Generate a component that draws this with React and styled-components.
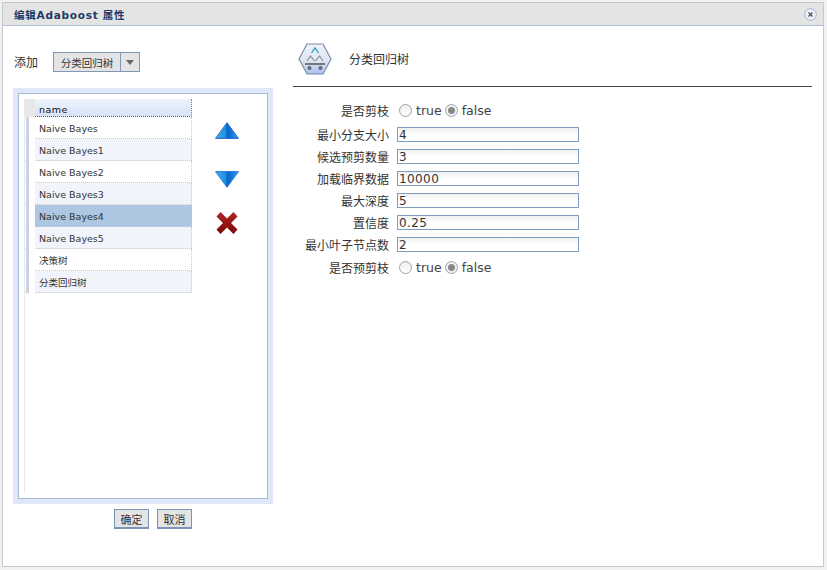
import React from "react";
import styled, { createGlobalStyle } from "styled-components";

const Global = createGlobalStyle`
  html, body { margin: 0; padding: 0; background: #f1f1f1; }
  * { box-sizing: border-box; }
`;
const latin = `"DejaVu Sans", "Noto Sans CJK SC", sans-serif`;
const Dialog = styled.main`
  width: 822px; height: 565px; margin: 2px 0 0 2px;
  border: 1px solid #c8c8c8; background: #fff; display: flex; flex-direction: column;
  font-family: ${latin}; color: #333;
`;
const TitleBar = styled.header`
  height: 23px; flex: none; background: #e4e4e4; border-bottom: 1px solid #aebcd9;
  display: flex; align-items: center; justify-content: space-between; padding: 0 6px 0 11px;
`;
const Title = styled.h1`
  margin: 0; font-size: 10.5px; font-weight: 700; color: #1d3a68; letter-spacing: 0.75px;
`;
const Body = styled.div`display: flex; flex: 1; min-height: 0;`;
const LeftCol = styled.section`
  width: 290px; flex: none; padding: 26px 0 0 10px; display: flex; flex-direction: column;
`;
const AddRow = styled.div`display: flex; align-items: center; height: 20px; gap: 14px; padding-left: 1px;`;
const AddLabel = styled.span`font-size: 12px; color: #333; width: 25px; padding-bottom: 1px;`;
const Combo = styled.div`display: flex; height: 20px;`;
const ComboText = styled.div`
  width: 68px; background: #e4e4e4; border: 1px solid #8097b5; font-size: 10.5px; color: #333;
  display: flex; align-items: center; justify-content: center;
`;
const ComboArrow = styled.div`
  width: 19px; background: #e4e4e4; border: 1px solid #8097b5; border-left-width: 0;
  display: flex; align-items: center; justify-content: center;
  &::after { content: ""; border: 4px solid transparent; border-top: 5px solid #666; border-bottom: 0; }
`;
const ListFrame = styled.div`
  width: 260px; height: 416px; margin-top: 16px; padding: 5px; background: #dfe8f8;
`;
const ListInner = styled.div`
  height: 100%; border: 1px solid #a9b9da; background: #fff; padding: 5px 0 0 5px; display: flex;
`;
const Grid = styled.div`
  width: 168px; height: 394px; border-left: 1px solid #e8e8e8; display: flex; flex-direction: column;
`;
const HeadRow = styled.div`display: flex; height: 18px;`;
const Corner = styled.div`width: 10px; background: #e8e8e8;`;
const HeadCell = styled.div`
  flex: 1; background: linear-gradient(#eef3fc, #d6e2f6); border-bottom: 1px dotted #555;
  border-right: 1px dotted #888; font-size: 9.5px; color: #111; letter-spacing: 0.5px;
  padding: 5px 0 0 4px;
`;
const Row = styled.div`display: flex; height: 22px;`;
const Stub = styled.div`
  width: 10px; padding-left: 1px; display: flex;
  background: linear-gradient(#ddd, #ddd) left bottom / 1px 1px no-repeat;
  &::before { content: ""; width: 2px; background: #c3d6f0; }
  &::after { content: ""; width: 1px; background: #cfcfcf; }
`;
const Cell = styled.div`
  flex: 1; display: flex; align-items: center; padding: 1px 0 0 4px; font-size: 9.5px; color: #333;
  background: ${p => (p.$selected ? "#adc6e2" : p.$alt ? "#f1f4fa" : "#fff")};
  border-bottom: 1px dotted #d8c8a0; border-right: 1px dotted #d8c8a0;
`;
const Tools = styled.div`width: 70px; display: flex; flex-direction: column; align-items: center;`;
const ToolSlot = styled.div`display: flex; margin-top: ${p => p.$top}px;`;
const Actions = styled.div`display: flex; gap: 8px; margin: 5px 0 0 101px;`;
const Btn = styled.button`
  width: 35px; height: 20px; padding: 0; background: #e4e4e4; border: 1px solid #7b93b5; border-bottom-width: 2px;
  font: 11px "Noto Sans CJK SC", sans-serif; color: #333;
`;
const RightCol = styled.section`width: 519px; flex: none; display: flex; flex-direction: column; padding-top: 17px;`;
const Head = styled.div`
  height: 44px; display: flex; align-items: flex-start; padding-left: 5px; gap: 17px; border-bottom: 1px solid #444; 
`;
const HeadText = styled.span`font: 12px "Noto Sans CJK SC", sans-serif; color: #333; margin-top: 7px;`;
const Form = styled.div`display: flex; flex-direction: column; padding-top: 11px;`;
const FormRow = styled.div`display: flex; align-items: center; height: ${p => (p.$radio ? 25 : 22)}px; gap: 8px;`;
const Label = styled.label`width: 96px; text-align: right; font: 12px "Noto Sans CJK SC", sans-serif; color: #333;`;
const Input = styled.input`
  width: 182px; height: 15px; border: 1px solid #7f9dc0; padding: 1px 1px 0; font: 12px ${latin}; color: #333;
  background: linear-gradient(#f0f0f0, #fff 50%); outline: none; letter-spacing: 0.4px;
`;
const Radios = styled.div`display: flex; align-items: center; font-size: 12.5px; color: #444; margin-left: 2px;`;
const RadioDot = styled.span`
  width: 13px; height: 13px; border-radius: 50%; border: 1px solid #9aa3ad; margin-right: 4px;
  background: ${p => (p.$on ? "radial-gradient(circle, #888 0 3px, #f2f2f2 4px)" : "linear-gradient(#eee, #fff)")};
`;
const RadioText = styled.span`margin-right: 3px;`;

const blue = (id) => (
  <defs><linearGradient id={id} x1="0" x2="1" y1="0" y2="0"><stop offset="0" stopColor="#4ab2f2"/><stop offset=".45" stopColor="#1c8ee0"/><stop offset=".5" stopColor="#0b62c6"/><stop offset=".7" stopColor="#1478d8"/><stop offset="1" stopColor="#3aa6ee"/></linearGradient></defs>
);
const Up = () => (
  <svg width="24" height="17" viewBox="0 0 24 17">
    {blue("u")}
    <path d="M12 .7 L23.5 16.4 H.5 Z" fill="url(#u)" stroke="#0a50c8" strokeWidth=".8" />
  </svg>
);
const Down = () => (
  <svg width="24" height="17" viewBox="0 0 24 17">
    {blue("d")}
    <path d="M.5 .6 H23.5 L12 16.3 Z" fill="url(#d)" stroke="#0a6ad8" strokeWidth=".8" />
  </svg>
);
const Del = () => (
  <svg width="24" height="24" viewBox="0 0 24 24">
    <defs><linearGradient id="x" x1="0" x2="0" y1="0" y2="1"><stop offset="0" stopColor="#b42222"/><stop offset="1" stopColor="#7a0808"/></linearGradient></defs>
    <path d="M1.5 5.5 L5.5 1 L12 7.5 L18.5 1 L22.5 5.5 L16 12 L22.5 18.5 L18.5 23 L12 16.5 L5.5 23 L1.5 18.5 L8 12 Z" fill="url(#x)" />
  </svg>
);
const Close = () => (
  <svg width="13" height="13" viewBox="0 0 13 13">
    <circle cx="6.5" cy="6.5" r="5.8" fill="#eef1f8" stroke="#9fb0d4" />
    <path d="M4.5 4.5 L8.5 8.5 M8.5 4.5 L4.5 8.5" stroke="#555" strokeWidth="1.4" />
  </svg>
);
const Hex = () => (
  <svg width="34" height="32" viewBox="0 0 34 32">
    <defs><linearGradient id="h" x1="0" x2="0" y1="0" y2="1"><stop offset="0" stopColor="#f0f3f8"/><stop offset=".55" stopColor="#dfe6f2"/><stop offset="1" stopColor="#a8c0f0"/></linearGradient></defs>
    <path d="M9 1 H25 L33 16 L25 31 H9 L1 16 Z" fill="url(#h)" stroke="#7c8ca8" strokeWidth="1.2" />
    <path d="M13.5 10 L17 5 L20.5 10" fill="none" stroke="#2a9ad0" strokeWidth="1.3" />
    <path d="M9 18 L12.5 13 L16.5 18 M17.5 18 L21.5 13 L25 18" fill="none" stroke="#8a8f98" strokeWidth="1.2" />
    <path d="M7 21 H27" stroke="#777" strokeWidth="2" />
    <circle cx="11.5" cy="25" r="2" fill="#667" /><circle cx="22.5" cy="25" r="2" fill="#667" />
  </svg>
);

const rows = ["Naive Bayes","Naive Bayes1","Naive Bayes2","Naive Bayes3","Naive Bayes4","Naive Bayes5","决策树","分类回归树"];
const fields = [["最小分支大小","4"],["候选预剪数量","3"],["加载临界数据","10000"],["最大深度","5"],["置信度","0.25"],["最小叶子节点数","2"]];

const RadioRow = ({ label }) => (
  <FormRow $radio>
    <Label>{label}</Label>
    <Radios>
      <RadioDot /><RadioText>true</RadioText>
      <RadioDot $on /><RadioText>false</RadioText>
    </Radios>
  </FormRow>
);

export default function App() {
  return (
    <>
      <Global />
      <Dialog>
        <TitleBar><Title>编辑Adaboost 属性</Title><Close /></TitleBar>
        <Body>
          <LeftCol>
            <AddRow>
              <AddLabel>添加</AddLabel>
              <Combo><ComboText>分类回归树</ComboText><ComboArrow /></Combo>
            </AddRow>
            <ListFrame>
              <ListInner>
                <Grid>
                  <HeadRow><Corner /><HeadCell>name</HeadCell></HeadRow>
                  {rows.map((r, i) => (
                    <Row key={r}><Stub /><Cell $alt={i % 2 === 1} $selected={i === 4}>{r}</Cell></Row>
                  ))}
                </Grid>
                <Tools>
                  <ToolSlot $top={23}><Up /></ToolSlot>
                  <ToolSlot $top={32}><Down /></ToolSlot>
                  <ToolSlot $top={23}><Del /></ToolSlot>
                </Tools>
              </ListInner>
            </ListFrame>
            <Actions><Btn>确定</Btn><Btn>取消</Btn></Actions>
          </LeftCol>
          <RightCol>
            <Head><Hex /><HeadText>分类回归树</HeadText></Head>
            <Form>
              <RadioRow label="是否剪枝" />
              {fields.map(([l, v]) => (
                <FormRow key={l}><Label>{l}</Label><Input defaultValue={v} /></FormRow>
              ))}
              <RadioRow label="是否预剪枝" />
            </Form>
          </RightCol>
        </Body>
      </Dialog>
    </>
  );
}
